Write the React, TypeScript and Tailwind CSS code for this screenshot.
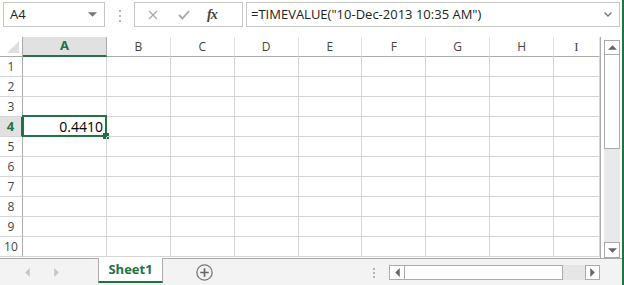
import React from 'react'

const columns = [
  { label: 'A', width: 84 },
  { label: 'B', width: 64 },
  { label: 'C', width: 64 },
  { label: 'D', width: 64 },
  { label: 'E', width: 64 },
  { label: 'F', width: 64 },
  { label: 'G', width: 64 },
  { label: 'H', width: 64 },
  { label: 'I', width: 46 },
]

const rows = [1, 2, 3, 4, 5, 6, 7, 8, 9, 10]

function Triangle({ dir, className }: { dir: 'up' | 'down' | 'left' | 'right'; className?: string }) {
  const pts = {
    up: '0,5 5,0 10,5',
    down: '0,0 10,0 5,5',
    left: '5,0 5,10 0,5',
    right: '0,0 0,10 5,5',
  }[dir]
  const vb = dir === 'up' || dir === 'down' ? '0 0 10 5' : '0 0 5 10'
  const size = dir === 'up' || dir === 'down' ? 'w-[9px] h-[5px]' : 'w-[5px] h-[9px]'
  return (
    <svg viewBox={vb} className={`${size} ${className ?? ''}`}>
      <polygon points={pts} fill="currentColor" />
    </svg>
  )
}

function FormulaBar() {
  return (
    <div className="flex items-start h-[37px] pt-[2px] pl-[3px]">
      <div className="flex items-center justify-between w-[102px] h-[25px] border border-[#c6c6c6] pl-[6px] pr-[7px] text-[13px] text-[#222]">
        <span>A4</span>
        <Triangle dir="down" className="text-[#777] w-[8px] h-[4px]" />
      </div>
      <div className="flex flex-col gap-[3px] ml-[14px] mt-[8px]">
        <span className="w-[2px] h-[2px] bg-[#b5b5b5]" />
        <span className="w-[2px] h-[2px] bg-[#b5b5b5]" />
        <span className="w-[2px] h-[2px] bg-[#b5b5b5]" />
      </div>
      <div className="flex items-center w-[109px] h-[25px] border border-[#c6c6c6] ml-[13px]">
        <svg viewBox="0 0 10 10" className="w-[10px] h-[10px] ml-[13px]">
          <path d="M1 1 L9 9 M9 1 L1 9" stroke="#a6a6a6" strokeWidth="1.2" />
        </svg>
        <svg viewBox="0 0 12 10" className="w-[12px] h-[10px] ml-[20px]">
          <path d="M1 5 L4.5 8.5 L11 1" stroke="#a6a6a6" strokeWidth="1.8" fill="none" />
        </svg>
        <span className="ml-[17px] text-[14px] italic font-bold text-[#444] font-['Liberation_Serif',serif] tracking-[-1px]">
          fx
        </span>
      </div>
      <div className="flex items-center justify-between w-[374px] h-[25px] border border-[#c6c6c6] ml-[3px] pl-[4px] pr-[7px] text-[13px] text-[#222]">
        <span>=TIMEVALUE("10-Dec-2013 10:35 AM")</span>
        <svg viewBox="0 0 8 5" className="w-[8px] h-[5px]">
          <path d="M0.5 0.5 L4 4 L7.5 0.5" stroke="#777" strokeWidth="1.4" fill="none" />
        </svg>
      </div>
    </div>
  )
}

function Grid() {
  return (
    <div className="w-[601px] border-r border-[#ababab]">
      <div className="flex h-[20px]">
        <div className="relative w-[23px] h-[20px] border-r border-b border-[#ababab] bg-white">
          <svg viewBox="0 0 12 12" className="absolute right-[3px] bottom-[3px] w-[12px] h-[12px]">
            <polygon points="12,0 12,12 0,12" fill="#dfdfdf" />
          </svg>
        </div>
        {columns.map((c) => {
          const sel = c.label === 'A'
          return (
            <div
              key={c.label}
              style={{ width: c.width }}
              className={
                sel
                  ? 'h-[20px] flex items-center justify-center border-r border-b-2 border-r-[#ababab] border-b-[#217346] bg-[#e1e1e1] text-[#217346] font-bold text-[13px] font-["Noto_Sans",sans-serif]'
                  : 'h-[20px] flex items-center justify-center border-r border-b border-r-[#e1e1e1] border-b-[#ababab] bg-white text-[#444] text-[12px]'
              }
            >
              {c.label === 'I' ? <span className="font-['Liberation_Serif',serif] text-[13px]">I</span> : c.label}
            </div>
          )
        })}
      </div>
      {rows.map((r) => {
        const sel = r === 4
        return (
          <div key={r} className="flex h-[20px]">
            <div
              className={
                sel
                  ? 'w-[23px] h-[20px] flex items-center justify-center border-r-2 border-b border-r-[#217346] border-b-[#d4d4d4] bg-[#e1e1e1] text-[#217346] font-bold text-[13px] font-["Noto_Sans",sans-serif]'
                  : 'w-[23px] h-[20px] flex items-center justify-center border-r border-b border-r-[#ababab] border-b-[#d4d4d4] bg-white text-[#444] text-[12px]'
              }
            >
              {r}
            </div>
            {columns.map((c) => (
              <div
                key={c.label}
                style={{ width: c.width }}
                className="relative h-[20px] border-r border-b border-[#d4d4d4]"
              >
                {sel && c.label === 'A' && (
                  <>
                    <div className="absolute -left-[1px] -top-[2px] w-[85px] h-[22px] border-2 border-[#217346] flex items-center justify-end pr-[2px] text-[14px] text-black">
                      0.4410
                    </div>
                    <div className="absolute -right-[3px] -bottom-[3px] w-[6px] h-[6px] bg-[#217346]" />
                  </>
                )}
              </div>
            ))}
          </div>
        )
      })}
    </div>
  )
}

function VScroll() {
  return (
    <div className="flex-1 bg-white pt-[3px] pl-[3px]">
      <div className="flex flex-col w-[16px] h-[218px] bg-[#e9e9e9]">
        <div className="flex items-center justify-center h-[15px] border border-[#ababab] bg-white">
          <Triangle dir="up" className="text-[#666] w-[8px] h-[4px]" />
        </div>
        <div className="h-[94px] border border-t-0 border-[#ababab] bg-white" />
        <div className="flex-1" />
        <div className="flex items-center justify-center h-[16px] border border-[#ababab] bg-white">
          <Triangle dir="down" className="text-[#666] w-[8px] h-[4px]" />
        </div>
      </div>
    </div>
  )
}

function SheetBar() {
  return (
    <div className="flex h-[28px] bg-[#f3f3f3]">
      <div className="flex items-center w-[98px] h-[28px] border-t border-[#ababab] pl-[25px] gap-[24px] text-[#c6c6c6]">
        <Triangle dir="left" className="w-[4px] h-[8px]" />
        <Triangle dir="right" className="w-[4px] h-[8px]" />
      </div>
      <div className="flex items-center justify-center w-[65px] h-[25px] bg-white border-l border-r border-[#ababab] border-b-2 border-b-[#217346] text-[#217346] font-bold text-[13px]">
        Sheet1
      </div>
      <div className="flex items-center flex-1 h-[28px] border-t border-[#ababab]">
        <svg viewBox="0 0 16 16" className="w-[17px] h-[17px] ml-[33px]">
          <circle cx="8" cy="8" r="7.2" stroke="#777" strokeWidth="1.2" fill="none" />
          <path d="M8 4 V12 M4 8 H12" stroke="#666" strokeWidth="1.6" />
        </svg>
        <div className="flex flex-col gap-[2px] ml-[160px]">
          <span className="w-[2px] h-[2px] bg-[#b5b5b5]" />
          <span className="w-[2px] h-[2px] bg-[#b5b5b5]" />
          <span className="w-[2px] h-[2px] bg-[#b5b5b5]" />
        </div>
        <div className="flex h-[15px] w-[211px] ml-[14px] bg-[#e6e6e6]">
          <div className="flex items-center justify-center w-[16px] border border-[#ababab] bg-white text-[#666]">
            <Triangle dir="left" className="w-[4px] h-[8px]" />
          </div>
          <div className="w-[158px] border border-l-0 border-[#ababab] bg-white" />
          <div className="flex-1" />
          <div className="flex items-center justify-center w-[15px] border border-[#ababab] bg-white text-[#666]">
            <Triangle dir="right" className="w-[4px] h-[8px]" />
          </div>
        </div>
      </div>
    </div>
  )
}

export default function App() {
  return (
    <div className="w-[624px] h-[285px] overflow-hidden bg-white border-r-2 border-[#217346] font-['Open_Sans','Noto_Sans',sans-serif]">
      <FormulaBar />
      <div className="flex">
        <Grid />
        <VScroll />
      </div>
      <SheetBar />
    </div>
  )
}
